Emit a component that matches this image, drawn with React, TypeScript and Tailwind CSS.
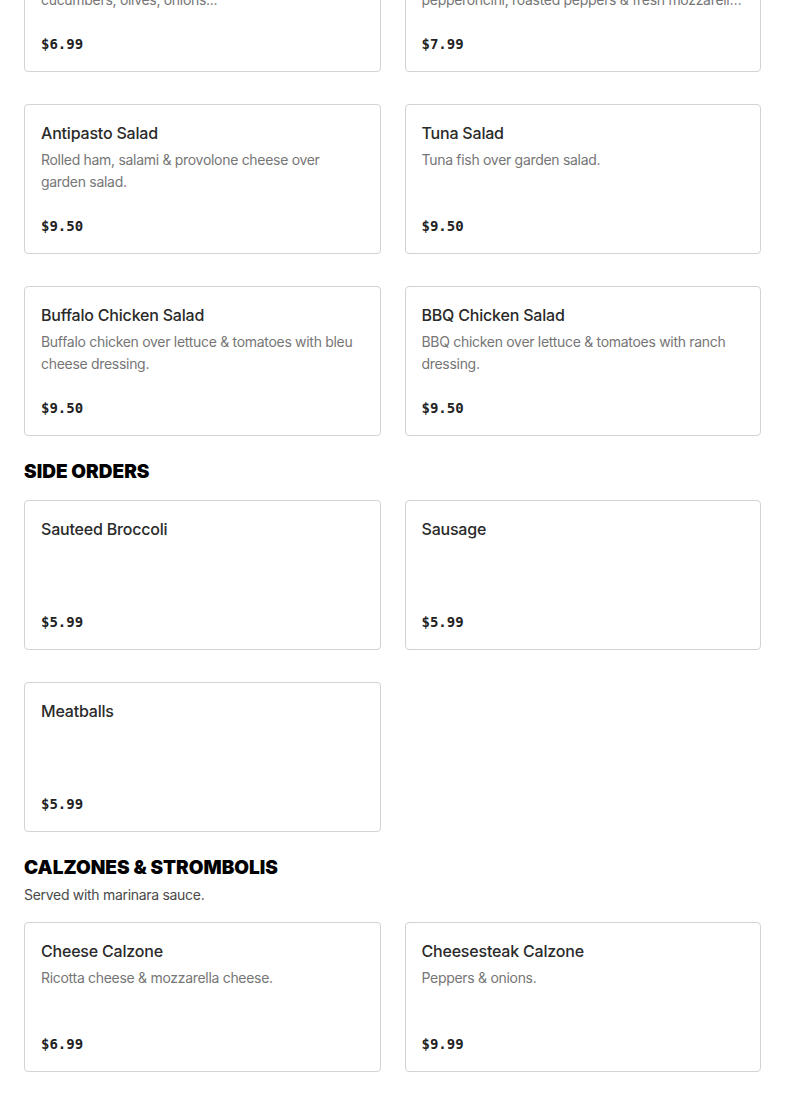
import type { ReactNode } from "react";

type Item = { name: string; desc?: ReactNode; price: string };

const Card = ({ name, desc, price }: Item) => (
  <div className="flex h-[150px] flex-col rounded-[4px] border border-[#d3d3d3] bg-white p-4">
    <div className="text-[16px] leading-6 font-medium tracking-[-0.2px] text-[#2a2a2a]">{name}</div>
    {desc && (
      <div className="mt-1 line-clamp-2 text-[14px] leading-[22px] tracking-[-0.3px] text-[#767676]">{desc}</div>
    )}
    <div className="mt-auto font-['DejaVu_Sans_Mono',monospace] text-[14px] leading-[22px] font-bold text-[#222]">
      {price}
    </div>
  </div>
);

const Grid = ({ items }: { items: Item[] }) => (
  <div className="grid grid-cols-2 gap-x-6 gap-y-8">
    {items.map((it) => (
      <Card key={it.name} {...it} />
    ))}
  </div>
);

const Section = ({
  title,
  note,
  items,
}: {
  title: string;
  note?: string;
  items: Item[];
}) => (
  <section className="mt-6">
    <h2 className="text-[19px] leading-6 font-black text-black uppercase">{title}</h2>
    {note && <p className="mt-1 text-[14px] leading-[22px] tracking-[-0.3px] text-[#4a4a4a]">{note}</p>}
    <div className="mt-4">
      <Grid items={items} />
    </div>
  </section>
);

const salads: Item[] = [
  {
    name: "Garden Salad",
    desc: (
      <>
        <span className="block truncate">Lettuce, tomatoes, carrots, red cabbage,</span>
        <span className="block truncate">cucumbers, olives, onions...</span>
      </>
    ),
    price: "$6.99",
  },
  {
    name: "Caprese Salad",
    desc: (
      <>
        <span className="block truncate">Lettuce, tomatoes, olives, red onions,</span>
        <span className="block truncate">pepperoncini, roasted peppers &amp; fresh mozzarella cheese.</span>
      </>
    ),
    price: "$7.99",
  },
  { name: "Antipasto Salad", desc: "Rolled ham, salami & provolone cheese over garden salad.", price: "$9.50" },
  { name: "Tuna Salad", desc: "Tuna fish over garden salad.", price: "$9.50" },
  {
    name: "Buffalo Chicken Salad",
    desc: "Buffalo chicken over lettuce & tomatoes with bleu cheese dressing.",
    price: "$9.50",
  },
  { name: "BBQ Chicken Salad", desc: "BBQ chicken over lettuce & tomatoes with ranch dressing.", price: "$9.50" },
];

const sides: Item[] = [
  { name: "Sauteed Broccoli", price: "$5.99" },
  { name: "Sausage", price: "$5.99" },
  { name: "Meatballs", price: "$5.99" },
];

const calzones: Item[] = [
  { name: "Cheese Calzone", desc: "Ricotta cheese & mozzarella cheese.", price: "$6.99" },
  { name: "Cheesesteak Calzone", desc: "Peppers & onions.", price: "$9.99" },
];

export default function App() {
  return (
    <div className="h-[1098px] overflow-hidden bg-white font-['Inter',sans-serif]">
      <div className="-mt-[78px] px-6">
        <Grid items={salads} />
        <Section title="Side Orders" items={sides} />
        <Section title="Calzones & Strombolis" note="Served with marinara sauce." items={calzones} />
      </div>
    </div>
  );
}
